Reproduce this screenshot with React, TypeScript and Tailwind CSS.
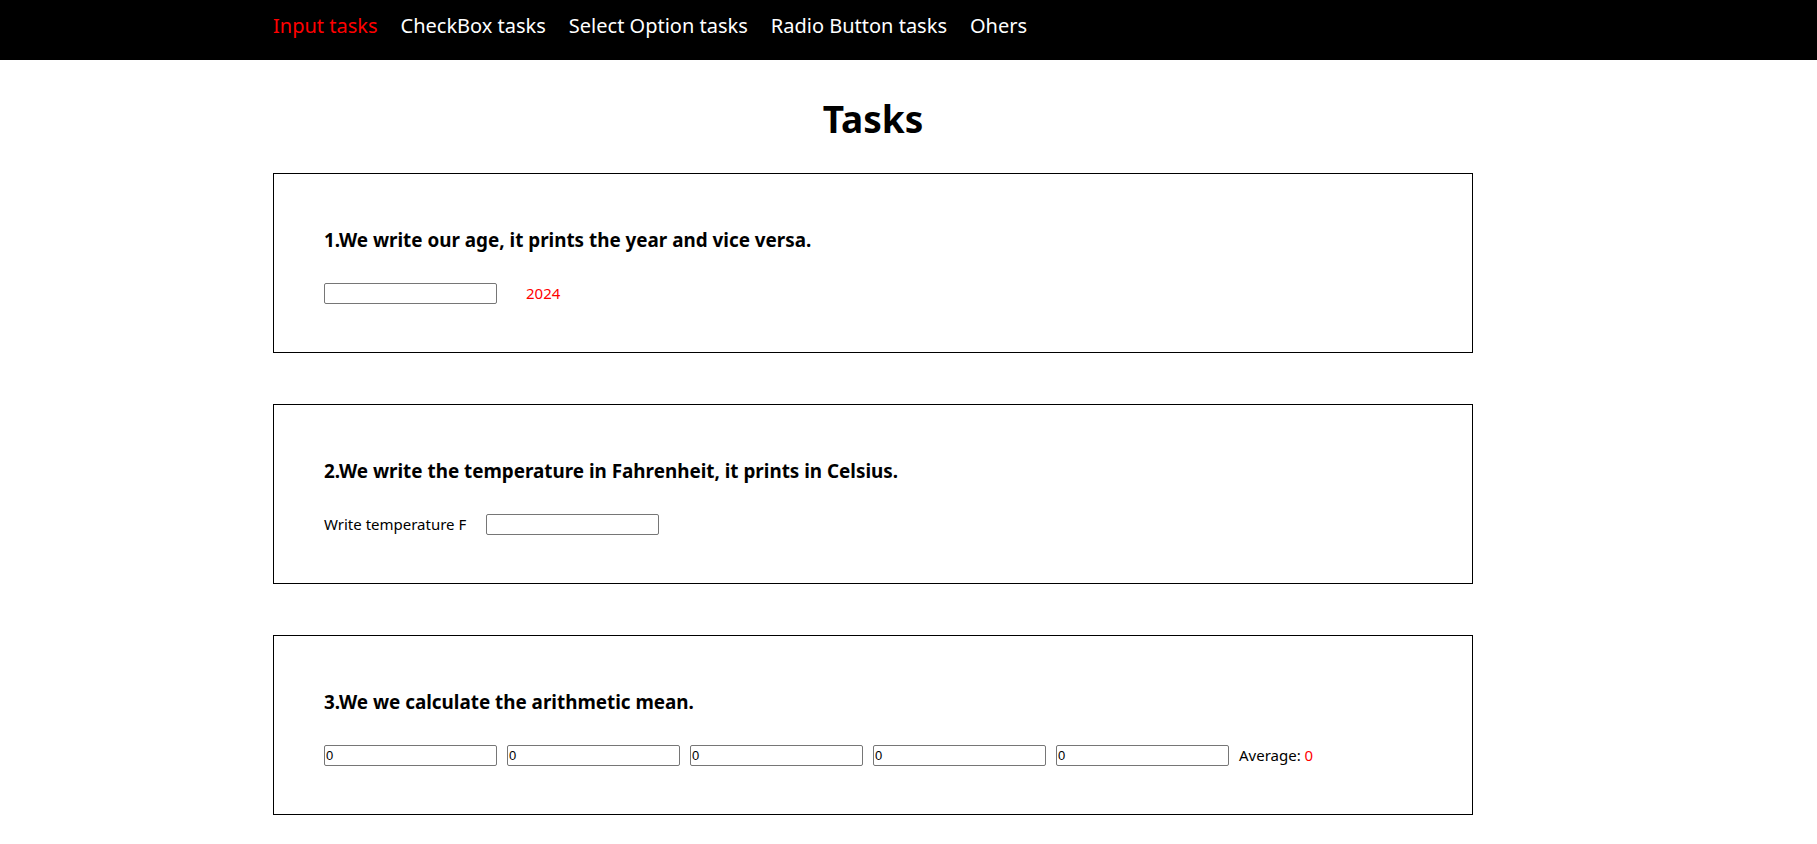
const navItems = ["Input tasks", "CheckBox tasks", "Select Option tasks", "Radio Button tasks", "Ohers"];

const Field = ({ value = "" }: { value?: string }) => (
  <input
    type="text"
    defaultValue={value}
    className="w-[173px] h-[21px] border border-[#767676] rounded-[2px] px-[1px] text-[13px] text-black font-['Liberation_Sans',sans-serif] outline-none"
  />
);

const Card = ({ title, children }: { title: string; children: React.ReactNode }) => (
  <div className="border border-black px-[50px] pt-[53px] pb-[48px]">
    <h3 className="text-[18.85px] font-bold leading-[26px] text-black">{title}</h3>
    <div className="mt-[30px] flex items-center h-[21px]">{children}</div>
  </div>
);

const App = () => {
  return (
    <div className="min-h-screen bg-white font-['Noto_Sans',sans-serif] text-black">
      <nav className="h-[60px] bg-black flex items-center">
        <div className="w-[1200px] ml-[273px] flex items-center gap-[23px] -mt-[9px]">
          {navItems.map((item, i) => (
            <a key={item} className={`text-[20px] cursor-pointer ${i === 0 ? "text-[#ff0000]" : "text-white"}`}>
              {item}
            </a>
          ))}
        </div>
      </nav>
      <div className="w-[1200px] ml-[273px] pb-10">
        <h1 className="text-center text-[37px] font-bold leading-[44px] mt-[37px] mb-[32px]">Tasks</h1>
        <div className="flex flex-col gap-[51px]">
          <Card title="1.We write our age, it prints the year and vice versa.">
            <Field />
            <span className="ml-[29px] text-[15px] text-[#ff0000]">2024</span>
          </Card>
          <Card title="2.We write the temperature in Fahrenheit, it prints in Celsius.">
            <span className="text-[15px] mr-[20px]">Write temperature F</span>
            <Field />
          </Card>
          <Card title="3.We we calculate the arithmetic mean.">
            <div className="flex items-center gap-[10px]">
              {[0, 1, 2, 3, 4].map((k) => (
                <Field key={k} value="0" />
              ))}
            </div>
            <span className="ml-[10px] text-[15px]">
              Average: <span className="text-[#ff0000]">0</span>
            </span>
          </Card>
        </div>
      </div>
    </div>
  );
};

export default App;
